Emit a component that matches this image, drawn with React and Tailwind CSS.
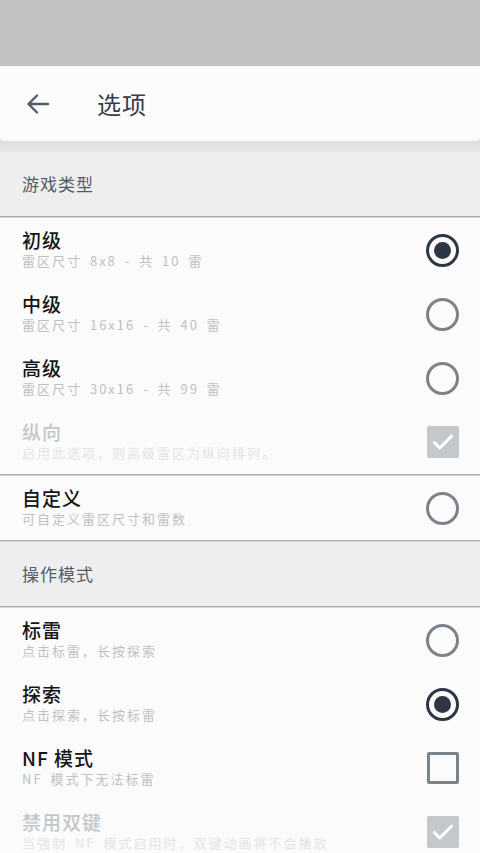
const font = { fontFamily: '"Noto Sans CJK SC", "Noto Sans", sans-serif' };

const gameTypes = [
  { title: "初级", sub: "雷区尺寸 8x8 - 共 10 雷", control: "radio-on" },
  { title: "中级", sub: "雷区尺寸 16x16 - 共 40 雷", control: "radio" },
  { title: "高级", sub: "雷区尺寸 30x16 - 共 99 雷", control: "radio" },
  { title: "纵向", sub: "启用此选项，则高级雷区为纵向排列。", control: "check-disabled", disabled: true },
];

const modes = [
  { title: "标雷", sub: "点击标雷，长按探索", control: "radio" },
  { title: "探索", sub: "点击探索，长按标雷", control: "radio-on" },
  { title: "NF 模式", sub: "NF 模式下无法标雷", control: "check" },
  { title: "禁用双键", sub: "当强制 NF 模式启用时，双键动画将不会播放", control: "check-disabled", disabled: true },
];

function Control({ type }) {
  if (type === "radio") {
    return <div className="w-[33px] h-[33px] rounded-full border-[3px] border-[#7c8289]" />;
  }
  if (type === "radio-on") {
    return (
      <div className="w-[33px] h-[33px] rounded-full border-[3px] border-[#2e3545] flex items-center justify-center">
        <div className="w-[17px] h-[17px] rounded-full bg-[#2e3545]" />
      </div>
    );
  }
  if (type === "check") {
    return <div className="w-[32px] h-[32px] rounded-[2px] border-[3px] border-[#7c8289]" />;
  }
  return (
    <div className="w-[32px] h-[32px] rounded-[2px] bg-[#c5c8cb] flex items-center justify-center">
      <svg width="26" height="26" viewBox="0 0 24 24" fill="none" stroke="#ffffff" strokeWidth="2.8" strokeLinecap="round" strokeLinejoin="round">
        <path d="M4 12.5l5 5L20 6.5" />
      </svg>
    </div>
  );
}

function Row({ item }) {
  return (
    <div className="h-16 flex items-center pl-[22px] pr-[21px]">
      <div className="flex-1 min-w-0 pb-[3px]">
        <p className={`text-[19px] leading-[24px] tracking-[1px] font-medium ${item.disabled ? "text-[#c4c7ca]" : "text-[#151515]"}`}>
          {item.title}
        </p>
        <p className={`text-[13px] leading-[18px] tracking-[2px] [word-spacing:3px] whitespace-nowrap ${item.disabled ? "text-[#e3e5e6]" : "text-[#bfc1c3]"}`}>
          {item.sub}
        </p>
      </div>
      <Control type={item.control} />
    </div>
  );
}

function Divider() {
  return <div className="h-[2px] bg-[#a7acb3] border-b border-[#d3d6da]" />;
}

function SectionHeader({ label }) {
  return (
    <div className="h-16 bg-[#eeeeee] flex items-center pl-[22px]">
      <span className="text-[17px] tracking-[1px] text-[#545b67]">{label}</span>
    </div>
  );
}

export default function App() {
  return (
    <div className="w-[480px] h-[853px] overflow-hidden bg-[#fafbfa]" style={font}>
      {/* status bar */}
      <div className="h-[66px] bg-[#c1c1c1]" />

      {/* toolbar */}
      <div className="bg-[linear-gradient(#9a9a9a,#cdcdcd_60%,#e6e6e6)] pb-[11px]">
        <div className="h-[75px] bg-[#fafbfa] rounded-b-[4px] flex items-center">
          <svg className="ml-[26px]" width="24" height="24" viewBox="0 0 24 24" fill="none" stroke="#545c68" strokeWidth="2.4" strokeLinecap="round" strokeLinejoin="round">
            <path d="M22 12H2.5M11 3.5L2.5 12l8.5 8.5" />
          </svg>
          <span className="ml-[47px] text-[24px] tracking-[1px] text-[#363d4b]">选项</span>
        </div>
      </div>

      <SectionHeader label="游戏类型" />
      <Divider />
      {gameTypes.map((item) => (
        <Row key={item.title} item={item} />
      ))}
      <Divider />
      <Row item={{ title: "自定义", sub: "可自定义雷区尺寸和雷数", control: "radio" }} />
      <Divider />
      <SectionHeader label="操作模式" />
      <Divider />
      {modes.map((item) => (
        <Row key={item.title} item={item} />
      ))}
    </div>
  );
}
